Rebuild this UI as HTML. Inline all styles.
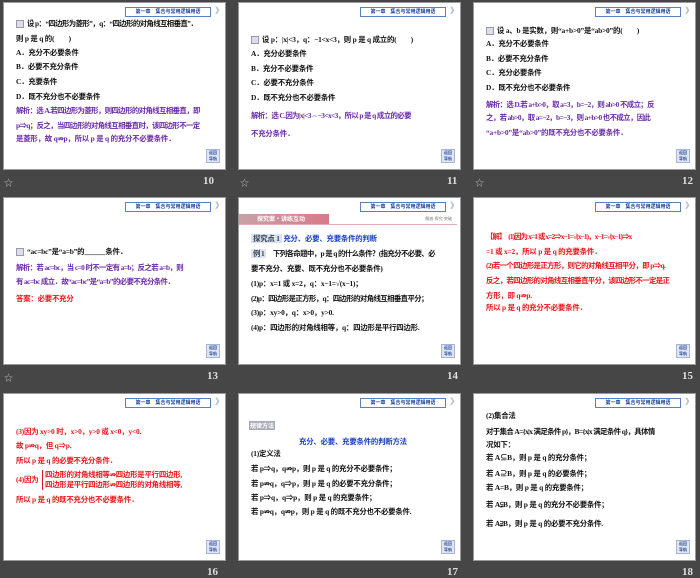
<!DOCTYPE html>
<html><head><meta charset="utf-8"><style>
body{margin:0;width:700px;height:578px;background:#464646;position:relative;overflow:hidden;font-family:"Liberation Serif","Noto Sans CJK SC",serif}
.s{position:absolute;width:223px;height:168px;background:#fff;border:1px solid #9a9a9a;box-sizing:border-box;overflow:hidden}
.hd{position:absolute;right:14px;top:4px;width:84px;height:8px;border:1px solid #5b7fc4;background:#fff;font-size:5px;line-height:8px;color:#1d3f9a;text-align:center;font-weight:bold;white-space:nowrap;font-family:"Noto Sans CJK SC",sans-serif}
.ch{position:absolute;right:4px;top:3px;font-size:8px;color:#9ab;line-height:10px;letter-spacing:-3px}
.bt{position:absolute;right:5px;bottom:6px;width:12px;height:12px;background:#dfe6f3;border:1px solid #a8b6d6;font-size:4px;color:#2a4a9a;line-height:6px;text-align:center;font-weight:bold;font-family:"Noto Sans CJK SC",sans-serif}
.l{position:absolute;left:12px;white-space:nowrap;font-size:7.4px;letter-spacing:-0.2px;line-height:10px;font-weight:bold;color:#111;font-family:"Liberation Serif","Noto Sans CJK SC",serif}
.t{letter-spacing:-0.6px}
.p{color:#6a2aa8}.r{color:#e8141a}.b{color:#1a3fc4}
.n{position:absolute;color:#ddd;font-weight:bold;font-size:11px;font-family:"Liberation Serif",serif}
.st{position:absolute;color:#bbb;font-size:9px}
.ic{display:inline-block;width:6px;height:6px;border:1px solid #99a;background:#dde;margin-right:3px;vertical-align:middle}
</style></head><body>

<!-- Slide 10 -->
<div class="s" style="left:3px;top:2px">
<div class="hd">第一章　集合与常用逻辑用语</div><div class="ch">〉〉</div>
<div class="l t" style="top:16px"><span class="ic"></span>设 p：“四边形为菱形”，q：“四边形的对角线互相垂直”．</div>
<div class="l" style="top:31px">则 p 是 q 的(　　)</div>
<div class="l" style="top:45px">A．充分不必要条件</div>
<div class="l" style="top:59px">B．必要不充分条件</div>
<div class="l" style="top:74px">C．充要条件</div>
<div class="l" style="top:89px">D．既不充分也不必要条件</div>
<div class="l p t" style="top:103px">解析：选 A.若四边形为菱形，则四边形的对角线互相垂直，即</div>
<div class="l p t" style="top:118px">p⇒q；反之，当四边形的对角线互相垂直时，该四边形不一定</div>
<div class="l p" style="top:131px">是菱形，故 q⇏p，所以 p 是 q 的充分不必要条件．</div>
<div class="bt">返回<br>导航</div></div>
<div class="st" style="left:4px;top:176px">☆</div><div class="n" style="left:203px;top:175px">10</div>

<!-- Slide 11 -->
<div class="s" style="left:238px;top:2px">
<div class="hd">第一章　集合与常用逻辑用语</div><div class="ch">〉〉</div>
<div class="l" style="top:32px"><span class="ic"></span>设 p：|x|&lt;3，q：−1&lt;x&lt;3，则 p 是 q 成立的(　　)</div>
<div class="l" style="top:46px">A．充分必要条件</div>
<div class="l" style="top:61px">B．充分不必要条件</div>
<div class="l" style="top:75px">C．必要不充分条件</div>
<div class="l" style="top:90px">D．既不充分也不必要条件</div>
<div class="l p t" style="top:108px">解析：选 C.因为|x|&lt;3⇔−3&lt;x&lt;3，所以 p 是 q 成立的必要</div>
<div class="l p" style="top:126px">不充分条件．</div>
<div class="bt">返回<br>导航</div></div>
<div class="st" style="left:240px;top:176px">☆</div><div class="n" style="left:447px;top:175px">11</div>

<!-- Slide 12 -->
<div class="s" style="left:473px;top:2px">
<div class="hd">第一章　集合与常用逻辑用语</div><div class="ch">〉〉</div>
<div class="l" style="top:23px"><span class="ic"></span>设 a、b 是实数，则“a+b&gt;0”是“ab&gt;0”的(　　)</div>
<div class="l" style="top:36px">A．充分不必要条件</div>
<div class="l" style="top:51px">B．必要不充分条件</div>
<div class="l" style="top:65px">C．充分必要条件</div>
<div class="l" style="top:80px">D．既不充分也不必要条件</div>
<div class="l p t" style="top:97px">解析：选 D.若 a+b&gt;0，取 a=3，b=−2，则 ab&gt;0 不成立；反</div>
<div class="l p t" style="top:110px">之，若 ab&gt;0，取 a=−2，b=−3，则 a+b&gt;0 也不成立，因此</div>
<div class="l p" style="top:125px">“a+b&gt;0”是“ab&gt;0”的既不充分也不必要条件．</div>
<div class="bt">返回<br>导航</div></div>
<div class="st" style="left:475px;top:176px">☆</div><div class="n" style="left:682px;top:175px">12</div>

<!-- Slide 13 -->
<div class="s" style="left:3px;top:197px">
<div class="hd">第一章　集合与常用逻辑用语</div><div class="ch">〉〉</div>
<div class="l" style="top:49px"><span class="ic"></span>“ac=bc”是“a=b”的______条件．</div>
<div class="l p t" style="top:65px">解析：若 ac=bc，当 c=0 时不一定有 a=b；反之若 a=b，则</div>
<div class="l p t" style="top:79px">有 ac=bc 成立．故“ac=bc”是“a=b”的必要不充分条件．</div>
<div class="l r" style="top:96px">答案：必要不充分</div>
<div class="bt">返回<br>导航</div></div>
<div class="st" style="left:4px;top:371px">☆</div><div class="n" style="left:207px;top:370px">13</div>

<!-- Slide 14 -->
<div class="s" style="left:238px;top:197px">
<div class="hd">第一章　集合与常用逻辑用语</div><div class="ch">〉〉</div>
<div style="position:absolute;left:0;top:16px;width:90px;height:10px;background:linear-gradient(90deg,#c9a0a8,#d77a88);color:#fff;font-size:6px;line-height:10px;padding-left:18px;box-sizing:border-box;font-weight:bold;font-family:'Noto Sans CJK SC',sans-serif">探究案·讲练互动</div>
<div style="position:absolute;left:0;top:26px;width:218px;height:1px;background:#e0b0b8"></div>
<div style="position:absolute;right:8px;top:18px;font-size:4px;color:#777">解惑·探究·突破</div>
<div class="l b" style="top:36px"><span style="background:#dde3f0;color:#345;padding:0 2px">探究点 1</span> 充分、必要、充要条件的判断</div>
<div class="l t" style="top:51px"><span style="background:#dde3f0;color:#345;padding:0 2px">例 1</span>　下列各命题中，p 是 q 的什么条件？(指充分不必要、必</div>
<div class="l" style="top:66px">要不充分、充要、既不充分也不必要条件)</div>
<div class="l" style="top:81px">(1)p：x=1 或 x=2，q：x−1=√(x−1)；</div>
<div class="l t" style="top:96px">(2)p：四边形是正方形，q：四边形的对角线互相垂直平分；</div>
<div class="l" style="top:110px">(3)p：xy&gt;0，q：x&gt;0，y&gt;0.</div>
<div class="l" style="top:125px">(4)p：四边形的对角线相等，q：四边形是平行四边形.</div>
<div class="bt">返回<br>导航</div></div>
<div class="n" style="left:447px;top:370px">14</div>

<!-- Slide 15 -->
<div class="s" style="left:473px;top:197px">
<div class="hd">第一章　集合与常用逻辑用语</div><div class="ch">〉〉</div>
<div class="l r" style="top:34px;letter-spacing:-0.9px">【解】　(1)因为 x=1 或 x=2⇒x−1=√(x−1)，x−1=√(x−1)⇒x</div>
<div class="l r" style="top:49px">=1 或 x=2，所以 p 是 q 的充要条件．</div>
<div class="l r t" style="top:63px">(2)若一个四边形是正方形，则它的对角线互相平分，即 p⇒q.</div>
<div class="l r t" style="top:78px">反之，若四边形的对角线互相垂直平分，该四边形不一定是正</div>
<div class="l r" style="top:93px">方形，即 q⇏p.</div>
<div class="l r" style="top:105px">所以 p 是 q 的充分不必要条件．</div>
<div class="bt">返回<br>导航</div></div>
<div class="n" style="left:682px;top:370px">15</div>

<!-- Slide 16 -->
<div class="s" style="left:3px;top:393px">
<div class="hd">第一章　集合与常用逻辑用语</div><div class="ch">〉〉</div>
<div class="l r" style="top:33px">(3)因为 xy&gt;0 时，x&gt;0，y&gt;0 或 x&lt;0，y&lt;0.</div>
<div class="l r" style="top:47px">故 p⇏q，但 q⇒p.</div>
<div class="l r" style="top:62px">所以 p 是 q 的必要不充分条件．</div>
<div class="l r" style="top:81px">(4)因为</div>
<div class="l r" style="top:76px;left:38px;border-left:1px solid #e8141a;padding-left:2px;line-height:10px">四边形的对角线相等⇏四边形是平行四边形,<br>四边形是平行四边形⇏四边形的对角线相等,</div>
<div class="l r" style="top:101px">所以 p 是 q 的既不充分也不必要条件．</div>
<div class="bt">返回<br>导航</div></div>
<div class="n" style="left:207px;top:566px">16</div>

<!-- Slide 17 -->
<div class="s" style="left:238px;top:393px">
<div class="hd">第一章　集合与常用逻辑用语</div><div class="ch">〉〉</div>
<div style="position:absolute;left:10px;top:27px;width:26px;height:9px;background:#a9aab8;color:#fff;font-size:6px;line-height:9px;text-align:center;font-weight:bold;font-family:'Noto Sans CJK SC',sans-serif">规律方法</div>
<div class="l b" style="top:43px;left:60px">充分、必要、充要条件的判断方法</div>
<div class="l" style="top:55px">(1)定义法</div>
<div class="l" style="top:70px">若 p⇒q，q⇏p，则 p 是 q 的充分不必要条件；</div>
<div class="l" style="top:85px">若 p⇏q，q⇒p，则 p 是 q 的必要不充分条件；</div>
<div class="l" style="top:99px">若 p⇒q，q⇒p，则 p 是 q 的充要条件；</div>
<div class="l" style="top:113px">若 p⇏q，q⇏p，则 p 是 q 的既不充分也不必要条件.</div>
<div class="bt">返回<br>导航</div></div>
<div class="n" style="left:447px;top:566px">17</div>

<!-- Slide 18 -->
<div class="s" style="left:473px;top:393px">
<div class="hd">第一章　集合与常用逻辑用语</div><div class="ch">〉〉</div>
<div class="l" style="top:17px">(2)集合法</div>
<div class="l t" style="top:33px">对于集合 A={x|x 满足条件 p}，B={x|x 满足条件 q}，具体情</div>
<div class="l" style="top:46px">况如下：</div>
<div class="l" style="top:59px">若 A⊆B，则 p 是 q 的充分条件；</div>
<div class="l" style="top:75px">若 A⊇B，则 p 是 q 的必要条件；</div>
<div class="l" style="top:89px">若 A=B，则 p 是 q 的充要条件；</div>
<div class="l" style="top:106px">若 A⫋B，则 p 是 q 的充分不必要条件；</div>
<div class="l" style="top:125px">若 A⫌B，则 p 是 q 的必要不充分条件.</div>
<div class="bt">返回<br>导航</div></div>
<div class="n" style="left:682px;top:566px">18</div>
</body></html>
